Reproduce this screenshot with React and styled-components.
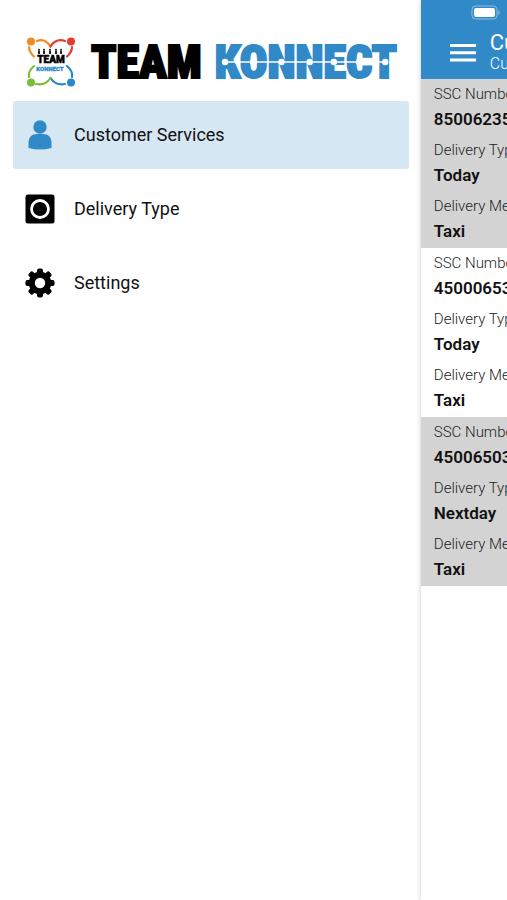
import React from "react";
import styled, { createGlobalStyle } from "styled-components";

const GlobalStyle = createGlobalStyle`
  *, *::before, *::after { box-sizing: border-box; }
  body {
    margin: 0;
    background: #fff;
    color: #111;
    font-family: Roboto, "Liberation Sans", sans-serif;
  }
`;

const Screen = styled.div`
  display: flex;
  min-height: 100vh;
  overflow: hidden;
`;

const Drawer = styled.aside`
  flex: 0 0 83%;
  display: flex;
  flex-direction: column;
  padding: 32px 12px 0 13px;
  background: #fff;
`;

const Brand = styled.div`
  display: flex;
  align-items: center;
  height: 60px;
  margin-bottom: 9px;
  padding-left: 13px;
`;

const Emblem = styled.svg`
  flex: none;
  width: 50px;
  height: 52px;
`;

const Wordmark = styled.h1`
  display: flex;
  gap: 13px;
  margin: 0 0 0 15px;
  font-family: "Liberation Sans Narrow", "Roboto Condensed", Roboto, sans-serif;
  font-size: 46px;
  font-weight: 900;
  line-height: 60px;
  white-space: nowrap;
`;

const Word = styled.span`
  position: relative;
  color: ${(p) => p.$color};
  -webkit-text-stroke: 2px ${(p) => p.$color};
`;

const Circuit = styled.svg`
  position: absolute;
  left: 0;
  top: 20px;
  width: 100%;
  height: 20px;
`;

const Menu = styled.nav`
  display: flex;
  flex-direction: column;
  gap: 6px;
`;

const MenuItem = styled.a`
  display: flex;
  align-items: center;
  gap: 19px;
  height: 68px;
  padding-left: 12px;
  border-radius: 3px;
  background: ${(p) => (p.$active ? "#d5e7f3" : "transparent")};
  color: #111;
  font-size: 18px;
  line-height: 24px;
  text-decoration: none;

  svg {
    width: 30px;
    height: 30px;
    color: ${(p) => (p.$active ? "#3289c8" : "#000")};
  }
`;

const Page = styled.main`
  flex: 0 0 100%;
  min-width: 0;
  background: #fff;
  box-shadow: 0 0 5px rgba(0, 0, 0, 0.22);
`;

const Header = styled.header`
  height: 79px;
  background: #3289c8;
  color: #fff;
`;

const StatusBar = styled.div`
  height: 28px;
  padding: 5px 0 0 50px;

  svg { display: block; }
`;

const TitleRow = styled.div`
  display: flex;
  align-items: center;
  gap: 14px;
  height: 50px;
  padding-left: 29px;
`;

const MenuButton = styled.button`
  display: block;
  padding: 0;
  border: 0;
  background: none;
  color: #fff;

  svg { display: block; }
`;

const Title = styled.h2`
  margin: 0;
  font-size: 22px;
  font-weight: 400;
  line-height: 22px;
`;

const Subtitle = styled.p`
  margin: 0;
  font-size: 16px;
  font-weight: 300;
  line-height: 20px;
`;

const Card = styled.dl`
  margin: 0;
  padding: 0 0 1px 13px;
  background: ${(p) => (p.$shaded ? "#d3d3d3" : "#fff")};
`;

const Field = styled.div`
  padding-bottom: 6px;
  white-space: nowrap;
`;

const Label = styled.dt`
  color: #222;
  font-size: 15px;
  font-weight: 300;
  line-height: 30px;
`;

const Value = styled.dd`
  margin: 0;
  color: #111;
  font-size: 17px;
  font-weight: 600;
  line-height: 20px;
`;

const PersonIcon = () => (
  <svg viewBox="0 0 30 30" fill="currentColor" aria-hidden="true">
    <circle cx="15" cy="7" r="6.7" />
    <path d="M3.5 28V23C3.5 17 7 14 12 14H18C23 14 26.5 17 26.5 23V28Q15 31 3.5 28Z" />
  </svg>
);

const DeliveryIcon = () => (
  <svg viewBox="0 0 30 30" aria-hidden="true">
    <rect x="0.5" y="0.5" width="29" height="29" rx="2.5" fill="currentColor" />
    <circle cx="15" cy="15" r="8.5" fill="none" stroke="#fff" strokeWidth="2.8" />
  </svg>
);

const GearIcon = () => (
  <svg viewBox="0 0 30 30" aria-hidden="true">
    <g fill="currentColor">
      {[0, 45, 90, 135].map((angle) => (
        <rect key={angle} x="12" y="0.4" width="6" height="29.2" rx="2" transform={`rotate(${angle} 15 15)`} />
      ))}
      <circle cx="15" cy="15" r="11.3" />
    </g>
    <circle cx="15" cy="15" r="5.2" fill="#fff" />
  </svg>
);

const TeamEmblem = () => (
  <Emblem viewBox="0 0 50 52" role="img" aria-label="Team Konnect emblem">
    <g fill="none" strokeWidth="2.2" strokeLinecap="round">
      <path d="M11 5Q19 2 24.5 10.5M3 11Q3 16 8 20.5" stroke="#f38b22" />
      <path d="M24.5 10.5Q30 2 39 5M46 11Q46 16 41 20.5" stroke="#e63b2e" />
      <path d="M41 30Q47 35 46 41M39 48Q30 50 24.5 42" stroke="#2987cc" />
      <path d="M24.5 42Q19 50 10 48M3 41Q2 35 8 30" stroke="#7bbd35" />
    </g>
    <circle cx="5" cy="5.5" r="4" fill="#f28a21" />
    <circle cx="45" cy="5.5" r="4" fill="#e53a2d" />
    <circle cx="5" cy="46.5" r="4" fill="#78bd35" />
    <circle cx="45" cy="46.5" r="4" fill="#2987cc" />
    <g fill="#222">
      {[13, 18, 24, 30, 35].map((x) => (
        <g key={x}>
          <circle cx={x} cy="13.8" r="1.1" />
          <rect x={x - 1} y="15" width="2" height="3" />
        </g>
      ))}
    </g>
    <g textAnchor="middle" fontFamily="Roboto, sans-serif" fontWeight="900">
      <text x="25" y="27" fontSize="10" fill="#000" stroke="#000" strokeWidth="0.5">TEAM</text>
      <text x="24" y="35" fontSize="6" fill="#3289c8" stroke="#3289c8" strokeWidth="0.3">KONNECT</text>
    </g>
  </Emblem>
);

const records = [
  { number: "85006235", type: "Today", method: "Taxi" },
  { number: "45000653", type: "Today", method: "Taxi" },
  { number: "45006503", type: "Nextday", method: "Taxi" },
];

export default function App() {
  return (
    <>
      <GlobalStyle />
      <Screen>
        <Drawer>
          <Brand>
            <TeamEmblem />
            <Wordmark>
              <Word $color="#000">TEAM</Word>
              <Word $color="#3289c8">
                KONNECT
                <Circuit viewBox="0 0 181 20" preserveAspectRatio="none" aria-hidden="true">
                  <path d="M10 10H169" stroke="#fff" strokeWidth="1.4" />
                  <g fill="#fff">
                    {[10, 38, 66, 94, 118, 143, 169].map((x) => (
                      <circle key={x} cx={x} cy="10" r="3.2" />
                    ))}
                  </g>
                </Circuit>
              </Word>
            </Wordmark>
          </Brand>
          <Menu aria-label="Main">
            <MenuItem href="#customer-services" $active aria-current="page">
              <PersonIcon />
              Customer Services
            </MenuItem>
            <MenuItem href="#delivery-type">
              <DeliveryIcon />
              Delivery Type
            </MenuItem>
            <MenuItem href="#settings">
              <GearIcon />
              Settings
            </MenuItem>
          </Menu>
        </Drawer>
        <Page>
          <Header>
            <StatusBar>
              <svg width="30" height="15" viewBox="0 0 30 15" aria-hidden="true">
                <rect x="1" y="1" width="25" height="13" rx="3.5" fill="none" stroke="#8fc0e3" />
                <rect x="3" y="3" width="21" height="9" rx="2" fill="#fff" />
                <path d="M27.5 5Q30 7.5 27.5 10Z" fill="#8fc0e3" />
              </svg>
            </StatusBar>
            <TitleRow>
              <MenuButton type="button" aria-label="Toggle menu">
                <svg width="26" height="20" viewBox="0 0 26 20" aria-hidden="true">
                  <path d="M0 2.5H26M0 9.7H26M0 16.9H26" stroke="currentColor" strokeWidth="3" />
                </svg>
              </MenuButton>
              <div>
                <Title>Customer</Title>
                <Subtitle>Customer</Subtitle>
              </div>
            </TitleRow>
          </Header>
          {records.map((record, index) => (
            <Card key={record.number} $shaded={index % 2 === 0}>
              <Field>
                <Label>SSC Number</Label>
                <Value>{record.number}</Value>
              </Field>
              <Field>
                <Label>Delivery Type</Label>
                <Value>{record.type}</Value>
              </Field>
              <Field>
                <Label>Delivery Method</Label>
                <Value>{record.method}</Value>
              </Field>
            </Card>
          ))}
        </Page>
      </Screen>
    </>
  );
}
